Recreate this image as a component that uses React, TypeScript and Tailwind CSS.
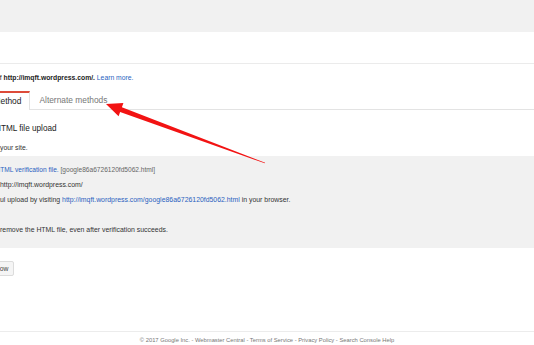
export default function App() {
  return (
    <div className="relative w-[534px] h-[345px] overflow-hidden bg-white font-['Liberation_Sans',Arial,sans-serif] text-[#222]">
      {/* top app bar */}
      <div className="h-[32px] bg-[#f1f1f1]" />
      <div className="h-[32px] border-b border-[#ebebeb]" />

      {/* ownership line */}
      <p className="mt-[8px] -ml-[4px] text-[6.8px] leading-[12px] whitespace-nowrap">
        of <span className="font-bold">http://imqft.wordpress.com/.</span>{" "}
        <span className="text-[#2a5fc0]">Learn more.</span>
      </p>

      {/* tabs */}
      <div className="mt-[7px] flex h-[19px] border-b border-[#e3e3e3] text-[8.4px]">
        <div className="-ml-[7px] -mb-px flex h-[19px] items-center border-t-2 border-r border-t-[#dd4b39] border-r-[#e3e3e3] bg-white pr-[8px] pl-[0.5px] text-[#222]">
          Method
        </div>
        <div className="flex items-center pl-[9px] text-[#777]">Alternate methods</div>
      </div>

      {/* heading */}
      <h2 className="mt-[13px] -ml-[5px] text-[8.2px] leading-[12px] whitespace-nowrap">HTML file upload</h2>
      <p className="mt-[7px] text-[6.8px] leading-[12px] text-[#333]">your site.</p>

      {/* instructions box */}
      <div className="mt-[2px] bg-[#f1f1f1] pt-[6px] pb-[11px] text-[6.9px] leading-[15px] text-[#333] whitespace-nowrap">
        <p className="-ml-[4.5px] text-[6.6px]">
          <span className="text-[#2a5fc0]">HTML verification file.</span>{" "}
          <span className="text-[#666]">[google86a6726120fd5062.html]</span>
        </p>
        <p>http://imqft.wordpress.com/</p>
        <p>
          ul upload by visiting{" "}
          <span className="text-[#2a5fc0]">http://imqft.wordpress.com/google86a6726120fd5062.html</span> in your browser.
        </p>
        <p className="mt-[15px]">remove the HTML file, even after verification succeeds.</p>
      </div>

      {/* action button */}
      <div className="mt-[13px] flex">
        <button className="-ml-[6px] h-[15px] rounded-[2px] border border-[#dcdcdc] bg-[#f5f5f5] pr-[5px] pl-[1px] text-[6.8px] leading-[13px] text-[#444]">
          now
        </button>
      </div>

      {/* footer */}
      <div className="mt-[55px] border-t border-[#ececec] pt-[3px] text-center text-[5.8px] leading-[10px] text-[#777] whitespace-nowrap">
        © 2017 Google Inc. - Webmaster Central - Terms of Service - Privacy Policy - Search Console Help
      </div>

      {/* annotation arrow */}
      <svg className="absolute left-0 top-0 pointer-events-none" width="534" height="345" viewBox="0 0 534 345">
        <polygon
          points="106,104 123.4,103 121.9,107.3 265.2,162.8 264.8,163.3 120.1,111.9 118.6,116.2"
          fill="#f21313"
        />
      </svg>
    </div>
  );
}
